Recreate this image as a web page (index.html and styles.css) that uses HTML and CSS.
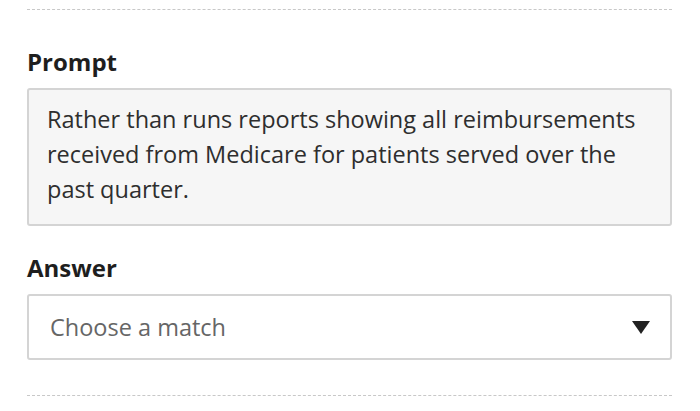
FILE: index.html
```html
<!DOCTYPE html>
<html>
<head>
<meta charset="utf-8">
<link rel="stylesheet" href="styles.css">
</head>
<body>
<div class="question">
  <h2 class="label label-prompt">Prompt</h2>
  <div class="prompt-box">Rather than runs reports showing all reimbursements received from Medicare for patients served over the past quarter.</div>
  <h2 class="label label-answer">Answer</h2>
  <div class="select">
    <span class="placeholder">Choose a match</span>
    <svg class="caret" width="18" height="13" viewBox="0 0 18 13"><path d="M0 0 H18 L9 13 Z" fill="#222"/></svg>
  </div>
</div>
</body>
</html>
```
FILE: styles.css
```css
html, body {
  margin: 0;
  padding: 0;
  background: #fff;
}
body {
  font-family: "Open Sans", "Liberation Sans", sans-serif;
  color: #333;
}
.question {
  margin: 9px 28px 0 27px;
  border-top: 1px dashed #c8c8c8;
  border-bottom: 1px dashed #c8c8c8;
  padding: 36px 0 35px;
}
.label {
  margin: 0;
  font-size: 24px;
  font-weight: 700;
  line-height: 32px;
  color: #1e1e1e;
}
.prompt-box {
  margin-top: 10px;
  background: #f6f6f6;
  border: 2px solid #d4d4d4;
  border-radius: 3px;
  padding: 12px 18px 17px;
  font-size: 23.5px;
  line-height: 35px;
  color: #2e2e2e;
}
.label-answer {
  margin-top: 26px;
}
.select {
  margin-top: 10px;
  height: 66px;
  border: 2px solid #d4d4d4;
  border-radius: 3px;
  display: flex;
  align-items: center;
  justify-content: space-between;
  padding: 0 20px 0 21px;
  box-sizing: border-box;
}
.placeholder {
  font-size: 23.5px;
  color: #666;
}
.caret {
  display: block;
}
```
